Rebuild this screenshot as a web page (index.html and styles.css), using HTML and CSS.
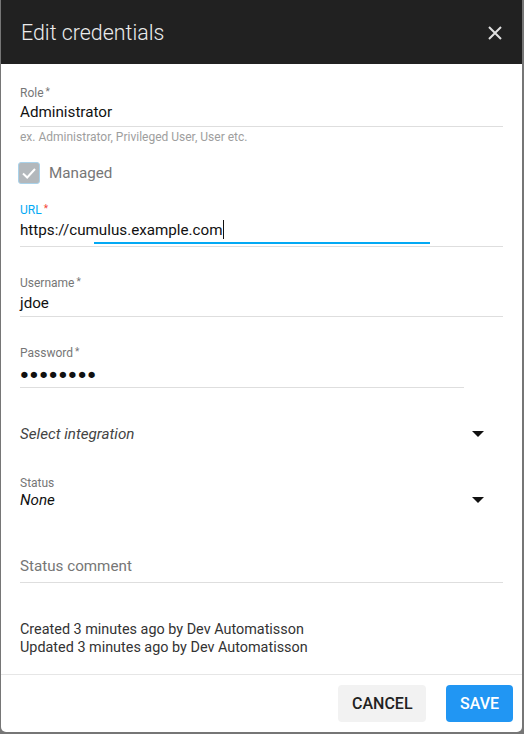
FILE: index.html
```html
<!DOCTYPE html>
<html>
<head>
<meta charset="utf-8">
<link rel="stylesheet" href="styles.css">
</head>
<body>
<div class="dialog">
  <div class="header">
    <span class="title">Edit credentials</span>
    <svg class="close" width="14" height="14" viewBox="0 0 14 14"><path d="M1 1L13 13M13 1L1 13" stroke="#e0e0e0" stroke-width="2"/></svg>
  </div>
  <div class="content">
    <div class="field f-role">
      <div class="label">Role<span class="ast">*</span></div>
      <div class="value">Administrator</div>
    </div>
    <div class="helper">ex. Administrator, Privileged User, User etc.</div>
    <div class="check-row">
      <span class="checkbox"><svg width="22" height="22" viewBox="0 0 22 22"><path d="M5 11.5L9.2 15.5L17 7" fill="none" stroke="#fff" stroke-width="2"/></svg></span>
      <span class="check-label">Managed</span>
    </div>
    <div class="field f-url focused">
      <div class="label">URL<span class="ast red">*</span></div>
      <div class="value">https://cumulus.example.com<span class="caret"></span></div>
      <div class="focus-line"></div>
    </div>
    <div class="field f-user">
      <div class="label">Username<span class="ast">*</span></div>
      <div class="value">jdoe</div>
    </div>
    <div class="field f-pass">
      <div class="label">Password<span class="ast">*</span></div>
      <div class="value dots">●●●●●●●●</div>
    </div>
    <div class="select f-integration">
      <span class="sel-text placeholder">Select integration</span>
      <span class="arrow"></span>
    </div>
    <div class="select f-status">
      <div class="label">Status</div>
      <div class="sel-row">
        <span class="sel-text">None</span>
        <span class="arrow"></span>
      </div>
    </div>
    <div class="field f-comment">
      <div class="value placeholder-plain">Status comment</div>
    </div>
    <div class="meta">
      <div>Created 3 minutes ago by Dev Automatisson</div>
      <div>Updated 3 minutes ago by Dev Automatisson</div>
    </div>
  </div>
  <div class="footer">
    <button class="btn btn-cancel">CANCEL</button>
    <button class="btn btn-save">SAVE</button>
  </div>
</div>
</body>
</html>
```
FILE: styles.css
```css
html, body {
  margin: 0;
  padding: 0;
  background: #767676;
  height: 734px;
  overflow: hidden;
}
body {
  font-family: Roboto, "Liberation Sans", sans-serif;
}
.dialog {
  margin-left: 1px;
  width: 521px;
  height: 732px;
  background: #fff;
  border-radius: 0 0 5px 5px;
  overflow: hidden;
  display: flex;
  flex-direction: column;
}
.header {
  height: 64px;
  background: #212121;
  display: flex;
  align-items: center;
  justify-content: space-between;
  padding: 0 19px 0 20px;
  flex-shrink: 0;
}
.title {
  color: #ececec;
  font-size: 21.4px;
  font-weight: 300;
  margin-top: 1px;
}
.close {
  margin-top: 1px;
  margin-right: 1px;
}
.content {
  padding: 21px 19px 0 19px;
  flex: 1;
}
.field {
  border-bottom: 1px solid #dedede;
  position: relative;
}
.label {
  font-size: 12px;
  line-height: 14px;
  color: #767676;
}
.ast {
  font-size: 10px;
  margin-left: 2px;
  vertical-align: 2px;
}
.ast.red { color: #f44336; }
.focused .label { color: #03a9f4; }
.value {
  font-size: 15.2px;
  line-height: 24px;
  color: #111;
  padding-bottom: 2px;
}
.f-url .value { padding-bottom: 4px; padding-top: 1px; }
.caret {
  display: inline-block;
  width: 1px;
  height: 19px;
  background: #111;
  vertical-align: -4px;
}
.focus-line {
  position: absolute;
  left: 74px;
  width: 336px;
  bottom: 2px;
  height: 2px;
  background: #03a9f4;
}
.helper {
  font-size: 12px;
  line-height: 14px;
  color: #9e9e9e;
  margin-top: 3px;
}
.check-row {
  display: flex;
  align-items: center;
  margin-top: 18px;
  margin-left: -2px;
  height: 22px;
}
.checkbox {
  width: 20px;
  height: 20px;
  border: 1px solid #a9d2ea;
  border-radius: 3px;
  background: #b3b8bc;
  display: flex;
  align-items: center;
  justify-content: center;
  overflow: hidden;
}
.checkbox svg { flex-shrink: 0; }
.check-label {
  font-size: 15.2px;
  color: #767676;
  margin-left: 9px;
}
.f-url { margin-top: 18px; }
.f-user { margin-top: 28px; }
.f-user .value { padding-top: 1px; padding-bottom: 1px; }
.f-pass { margin-top: 28px; width: 444px; }
.dots {
  font-size: 14.6px;
  letter-spacing: 0.8px;
  line-height: 24px;
  padding-top: 2px;
  padding-bottom: 1px;
}
.select {
  display: flex;
  align-items: center;
  justify-content: space-between;
  padding-right: 19px;
}
.f-integration { margin-top: 34px; height: 24px; }
.sel-text {
  font-size: 15.2px;
  font-style: italic;
  color: #111;
  line-height: 24px;
}
.sel-text.placeholder { color: #444; }
.arrow {
  width: 0;
  height: 0;
  border-left: 6px solid transparent;
  border-right: 6px solid transparent;
  border-top: 6px solid #111;
}
.f-status {
  display: block;
  margin-top: 30px;
  padding-right: 0;
}
.sel-row {
  display: flex;
  align-items: center;
  justify-content: space-between;
  padding-right: 19px;
  margin-top: -2px;
}
.f-comment { margin-top: 42px; }
.placeholder-plain { color: #767676; padding-bottom: 4px; }
.meta {
  margin-top: 38px;
  font-size: 14.4px;
  line-height: 18px;
  color: #333;
}
.footer {
  border-top: 1px solid #e6e6e6;
  height: 58px;
  display: flex;
  justify-content: flex-end;
  align-items: flex-start;
  padding: 10px 9px 0 0;
  gap: 20px;
  box-sizing: border-box;
  flex-shrink: 0;
}
.btn {
  height: 37px;
  border: none;
  border-radius: 4px;
  font-family: Roboto, "Liberation Sans", sans-serif;
  font-size: 16px;
  font-weight: 500;
  padding: 0 14px;
}
.btn-cancel {
  background: #f2f2f2;
  color: #222;
  width: 88px;
}
.btn-save {
  background: #2196f3;
  color: #fff;
  width: 67px;
}
```
